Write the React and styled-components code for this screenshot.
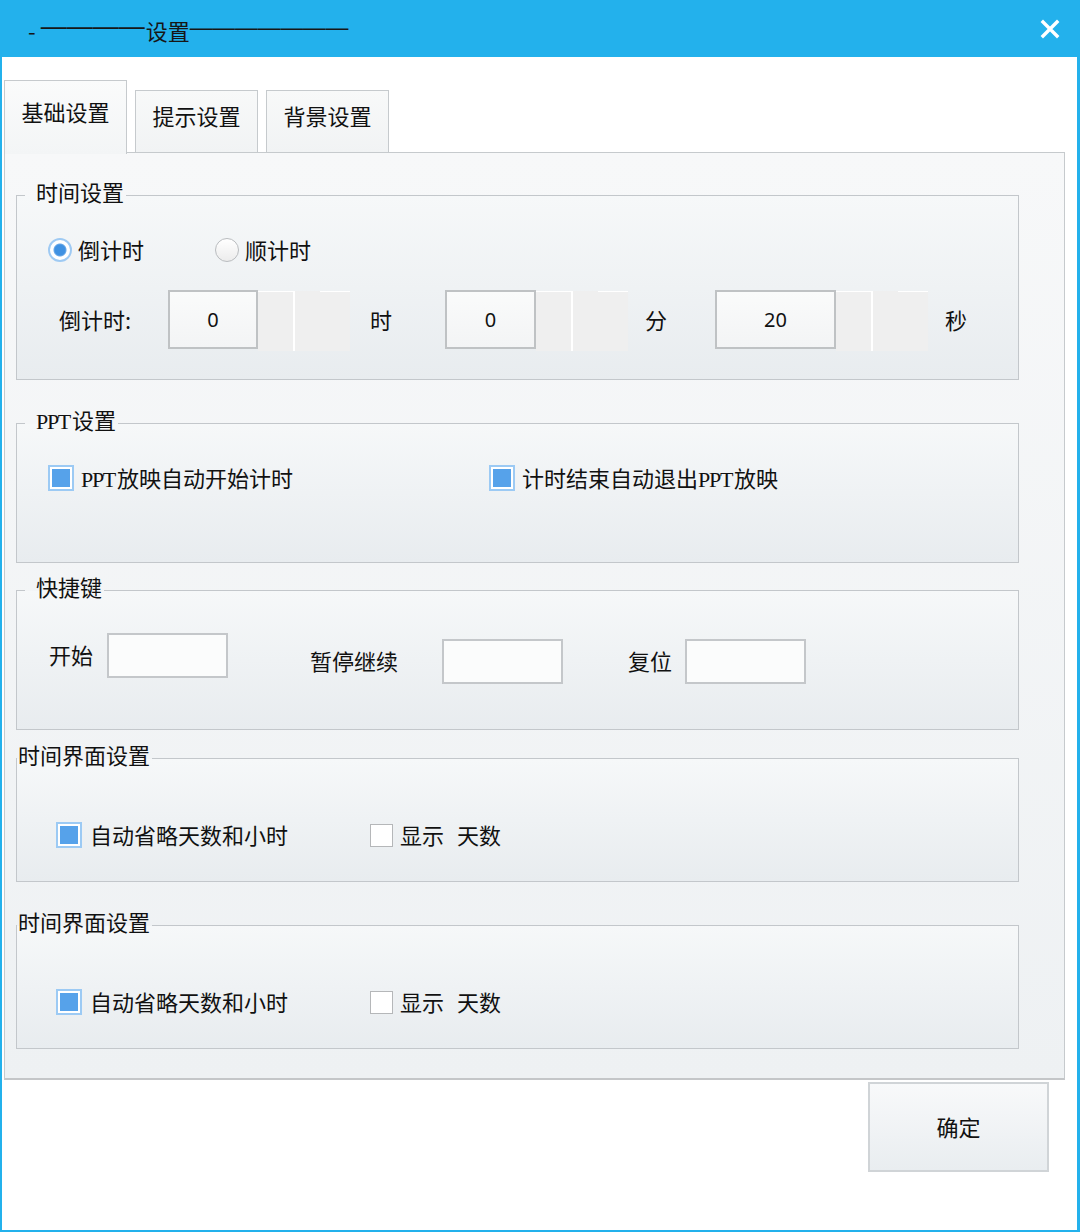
import React from "react";
import styled, { createGlobalStyle } from "styled-components";

const GlobalStyle = createGlobalStyle`
  html, body {
    margin: 0;
    padding: 0;
    background: #ffffff;
  }
  body {
    font-family: "Noto Sans CJK SC", "Microsoft YaHei", sans-serif;
    color: #111;
  }
`;

const Window = styled.div`
  width: 1080px;
  height: 1232px;
  box-sizing: border-box;
  border: solid #23b1ec;
  border-width: 0 3px 2px 2px;
  background: #fff;
  display: flex;
  flex-direction: column;
`;

const TitleBar = styled.div`
  height: 57px;
  flex-shrink: 0;
  background: #23b1ec;
  display: flex;
  align-items: center;
  justify-content: space-between;
  padding: 0 17px 0 26px;
`;

const Title = styled.div`
  font-size: 22px;
  line-height: 30px;
  color: #161616;
  white-space: nowrap;
`;

// dash runs either side of the caption
const Rule = styled.span`
  font-family: "Liberation Sans", Arial, sans-serif;
  font-size: ${(p) => p.$size}px;
  line-height: 1;
  vertical-align: 5px;
  margin: 0 ${(p) => p.$mr || 0}px 0 ${(p) => p.$ml || 0}px;
`;

const CloseButton = styled.button`
  width: 20px;
  height: 20px;
  padding: 0;
  border: none;
  background: none;
  display: flex;
  cursor: pointer;
`;

const Body = styled.div`
  flex: 1;
  display: flex;
  flex-direction: column;
  padding: 0 12px 0 2px;
`;

const TabStrip = styled.div`
  margin-top: 23px;
  height: 72px;
  display: flex;
  align-items: flex-end;
  position: relative;
  z-index: 1;
`;

const Tab = styled.div`
  box-sizing: border-box;
  width: 123px;
  height: ${(p) => (p.$active ? 74 : 62)}px;
  margin-bottom: ${(p) => (p.$active ? -2 : 0)}px;
  margin-left: ${(p) => p.$ml || 0}px;
  padding-top: ${(p) => (p.$active ? 15 : 9)}px;
  border: 1px solid #c6cacd;
  border-bottom: none;
  background: ${(p) =>
    p.$active
      ? "linear-gradient(#fafbfb, #f3f5f6)"
      : "linear-gradient(#f8f9f9, #f1f3f4)"};
  text-align: center;
  font-size: 22px;
  line-height: 30px;
  cursor: default;
`;

const Panel = styled.div`
  box-sizing: border-box;
  border: 1px solid #c6cacd;
  border-bottom: 2px solid #c4c6c8;
  background: linear-gradient(#f7f8f9, #eef1f3);
  padding: 23px 45px 29px 11px;
`;

const Group = styled.fieldset`
  margin: ${(p) => p.$mt || 0}px 0 0 0;
  padding: 0;
  min-width: 0;
  border: 1px solid #c3c7cb;
  background: linear-gradient(#f6f8f9, #e8ecef);
`;

const Legend = styled.legend`
  margin-left: ${(p) => (p.$flush ? 0 : 8)}px;
  padding: 0 2px 8px ${(p) => (p.$flush ? 1 : 11)}px;
  font-size: 22px;
  line-height: 30px;
`;

const GroupBody = styled.div`
  box-sizing: border-box;
  height: ${(p) => p.$h}px;
  padding: ${(p) => p.$pt}px 0 0 ${(p) => p.$pl}px;
`;

const OptionRow = styled.div`
  display: flex;
  align-items: center;
  height: 28px;
`;

const Option = styled.label`
  display: flex;
  align-items: center;
  width: ${(p) => (p.$w ? `${p.$w}px` : "auto")};
  gap: ${(p) => p.$gap || 7}px;
  font-size: 22px;
  line-height: 28px;
  word-spacing: 8px;
`;

const OptionText = styled.span`
  padding-bottom: 3px;
`;

const RadioDot = styled.span`
  box-sizing: border-box;
  width: 24px;
  height: 24px;
  border-radius: 50%;
  flex-shrink: 0;
  border: ${(p) => (p.$on ? "2px solid #9fcaf3" : "1px solid #b9bcbf")};
  background: ${(p) =>
    p.$on
      ? "radial-gradient(circle, #3f91e2 0 5px, #6aa9e8 6px, #ffffff 7px)"
      : "linear-gradient(#ffffff, #ececec)"};
`;

const CheckBox = styled.span`
  box-sizing: border-box;
  flex-shrink: 0;
  width: ${(p) => (p.$on ? 26 : 23)}px;
  height: ${(p) => (p.$on ? 26 : 23)}px;
  border: ${(p) => (p.$on ? "2px solid #9ccaf4" : "1px solid #b5b7b9")};
  background: ${(p) => (p.$on ? "#56a2ea" : "#ffffff")};
  box-shadow: ${(p) => (p.$on ? "inset 0 0 0 2px #ffffff" : "none")};
`;

// half-width latin letters inside the Chinese labels
const Latin = styled.span`
  font-family: "Liberation Serif", "Times New Roman", serif;
  font-size: 22px;
  line-height: 1;
  letter-spacing: -1.3px;
  word-spacing: 0;
  margin-right: 2px;
`;

const CountRow = styled.div`
  display: flex;
  align-items: center;
  margin-top: 26px;
  height: 60px;
`;

const RowLabel = styled.div`
  box-sizing: border-box;
  width: ${(p) => p.$w}px;
  padding-left: ${(p) => p.$pl || 0}px;
  padding-bottom: 3px;
  flex-shrink: 0;
  font-size: 22px;
  line-height: 30px;
`;

const Spinner = styled.div`
  display: flex;
  align-items: flex-start;
  height: 60px;
`;

const NumberBox = styled.div`
  box-sizing: border-box;
  width: ${(p) => p.$w}px;
  height: 59px;
  border: 2px solid #bfc2c4;
  background: linear-gradient(#fafbfb, #f3f4f5);
  display: flex;
  align-items: center;
  justify-content: center;
  font-family: "Noto Sans", "Liberation Sans", sans-serif;
  font-size: 20px;
`;

const SpinTail = styled.div`
  display: flex;
  height: 60px;
  margin-top: 1px;
  background: #efefef;
`;

const SpinPart = styled.div`
  box-sizing: border-box;
  width: ${(p) => p.$w}px;
  height: 100%;
  border-top: ${(p) => (p.$edge ? "1px solid #ffffff" : "none")};
  border-right: ${(p) => (p.$split ? "2px solid #ffffff" : "none")};
`;

const ShortcutRow = styled.div`
  display: flex;
  align-items: flex-start;
`;

const ShortcutPair = styled.div`
  display: flex;
  align-items: center;
  margin-left: ${(p) => p.$ml || 0}px;
  margin-top: ${(p) => p.$mt || 0}px;
`;

const KeyInput = styled.div`
  box-sizing: border-box;
  width: 121px;
  height: 45px;
  border: 2px solid #c4c7ca;
  background: #fbfcfc;
`;

const Footer = styled.div`
  display: flex;
  justify-content: flex-end;
  padding: 2px 16px 0 0;
`;

const ConfirmButton = styled.button`
  box-sizing: border-box;
  width: 181px;
  height: 90px;
  padding: 0 0 3px;
  border: 2px solid #d0d4d7;
  background: linear-gradient(#f8f9fa, #e9edf0);
  font-family: inherit;
  font-size: 22px;
  color: #111;
  cursor: pointer;
`;

const Spin = ({ width, value }) => (
  <Spinner>
    <NumberBox $w={width}>{value}</NumberBox>
    <SpinTail>
      <SpinPart $w={37} $edge $split />
      <SpinPart $w={25} />
      <SpinPart $w={30} $edge />
    </SpinTail>
  </Spinner>
);

const DisplayGroup = ({ mt }) => (
  <Group $mt={mt}>
    <Legend $flush>时间界面设置</Legend>
    <GroupBody $h={104} $pt={44} $pl={39}>
      <OptionRow>
        <Option $w={314} $gap={8}>
          <CheckBox $on />
          <OptionText>自动省略天数和小时</OptionText>
        </Option>
        <Option>
          <CheckBox />
          <OptionText>显示 天数</OptionText>
        </Option>
      </OptionRow>
    </GroupBody>
  </Group>
);

const App = () => {
  return (
    <>
      <GlobalStyle />
      <Window>
        <TitleBar>
          <Title>
            -<Rule $size={26} $ml={5} $mr={1}>————</Rule>设置
            <Rule $size={22.7}>———————</Rule>
          </Title>
          <CloseButton aria-label="关闭">
            <svg width="20" height="20" viewBox="0 0 20 20">
              <path
                d="M3 3 L17 17 M17 3 L3 17"
                stroke="#ffffff"
                strokeWidth="3.4"
                strokeLinecap="square"
              />
            </svg>
          </CloseButton>
        </TitleBar>

        <Body>
          <TabStrip>
            <Tab $active>基础设置</Tab>
            <Tab $ml={8}>提示设置</Tab>
            <Tab $ml={8}>背景设置</Tab>
          </TabStrip>

          <Panel>
            <Group>
              <Legend>时间设置</Legend>
              <GroupBody $h={165} $pt={22} $pl={31}>
                <OptionRow>
                  <Option $w={167} $gap={6}>
                    <RadioDot $on />
                    <OptionText>倒计时</OptionText>
                  </Option>
                  <Option $gap={6}>
                    <RadioDot />
                    <OptionText>顺计时</OptionText>
                  </Option>
                </OptionRow>
                <CountRow>
                  <RowLabel $w={120} $pl={11}>倒计时:</RowLabel>
                  <Spin width={90} value="0" />
                  <RowLabel $w={95} $pl={20}>时</RowLabel>
                  <Spin width={91} value="0" />
                  <RowLabel $w={87} $pl={17}>分</RowLabel>
                  <Spin width={121} value="20" />
                  <RowLabel $w={60} $pl={17}>秒</RowLabel>
                </CountRow>
              </GroupBody>
            </Group>

            <Group $mt={24}>
              <Legend>
                <Latin>PPT</Latin>设置
              </Legend>
              <GroupBody $h={120} $pt={22} $pl={31}>
                <OptionRow>
                  <Option $w={441}>
                    <CheckBox $on />
                    <OptionText>
                      <Latin>PPT</Latin>放映自动开始计时
                    </OptionText>
                  </Option>
                  <Option>
                    <CheckBox $on />
                    <OptionText>
                      计时结束自动退出<Latin>PPT</Latin>放映
                    </OptionText>
                  </Option>
                </OptionRow>
              </GroupBody>
            </Group>

            <Group $mt={8}>
              <Legend>快捷键</Legend>
              <GroupBody $h={120} $pt={24} $pl={32}>
                <ShortcutRow>
                  <ShortcutPair>
                    <RowLabel $w={58}>开始</RowLabel>
                    <KeyInput />
                  </ShortcutPair>
                  <ShortcutPair $ml={82} $mt={6}>
                    <RowLabel $w={132}>暂停继续</RowLabel>
                    <KeyInput />
                  </ShortcutPair>
                  <ShortcutPair $ml={65} $mt={6}>
                    <RowLabel $w={57}>复位</RowLabel>
                    <KeyInput />
                  </ShortcutPair>
                </ShortcutRow>
              </GroupBody>
            </Group>

            <DisplayGroup mt={9} />
            <DisplayGroup mt={24} />
          </Panel>

          <Footer>
            <ConfirmButton>确定</ConfirmButton>
          </Footer>
        </Body>
      </Window>
    </>
  );
};

export default App;
